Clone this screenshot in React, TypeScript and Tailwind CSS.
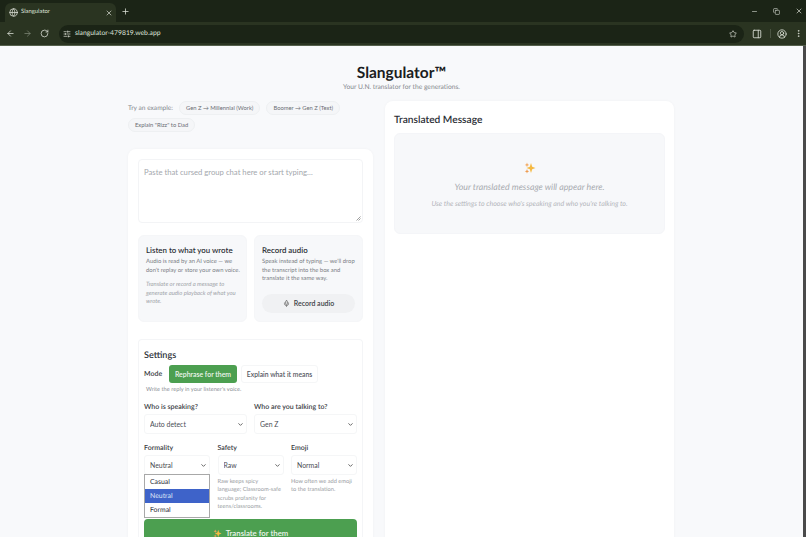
import { ArrowLeft, ArrowRight, RotateCw, SlidersHorizontal, Star, PanelRight, CircleUserRound, EllipsisVertical, Globe, X, Plus, Minus, Copy, Mic, ChevronDown } from "lucide-react";

const font = "font-['Lato',sans-serif] [text-rendering:geometricPrecision]";

const Sparkles = ({ size }: { size: number }) => (
  <svg width={size} height={size} viewBox="0 0 24 24" className="shrink-0">
    <path d="M14 2 L16.4 9.6 L23 12 L16.4 14.4 L14 22 L11.6 14.4 L5 12 L11.6 9.6 Z" fill="#f5b942" />
    <path d="M6 1 L7.2 4.6 L10.5 5.8 L7.2 7 L6 10.5 L4.8 7 L1.5 5.8 L4.8 4.6 Z" fill="#f2a65a" />
    <path d="M6 14 L7.2 17.4 L10.5 18.6 L7.2 19.8 L6 23 L4.8 19.8 L1.5 18.6 L4.8 17.4 Z" fill="#ee9a4d" />
  </svg>
);

const Chip = ({ label }: { label: string }) => (
  <button className="h-[14px] rounded-full border border-[#eef0f2] bg-[#f5f6f8] px-[6px] text-[5.8px] leading-[12px] text-[#6a6d74]">{label}</button>
);

const Field = ({ label, value, className }: { label: string; value: string; className: string }) => (
  <label className={"flex flex-col " + className}>
    <span className="text-[7px] leading-[12px] font-semibold text-[#3a3d44]">{label}</span>
    <div className="relative mt-[1px]">
      <select defaultValue={value} className="block h-[20px] w-full appearance-none rounded-[3px] border border-[#f5f6f7] bg-white pl-[5px] text-[6.9px] text-[#4a4d54] outline-none">
        <option>{value}</option>
      </select>
      <ChevronDown size={7} strokeWidth={3} className="absolute right-[3px] top-[7px] text-[#555]" />
    </div>
  </label>
);

const BrowserChrome = () => (
  <div className="shrink-0 bg-[#1b2416] text-[#dfe3da]">
    <div className="flex h-[22px] items-end pl-[5px]">
      <div className="flex h-[19px] w-[111px] items-center rounded-t-[6px] bg-[#2a3421] pl-[4px] pr-[3px]">
        <Globe size={9} className="shrink-0" />
        <span className="ml-[3px] flex-1 text-[5.9px]">Slangulator</span>
        <X size={8} />
      </div>
      <Plus size={9} className="mb-[6px] ml-[5px]" />
      <div className="mb-[7px] ml-auto flex items-center gap-[15px] pr-[3px]">
        <Minus size={7} />
        <Copy size={7} />
        <X size={8} />
      </div>
    </div>
    <div className="flex h-[23px] items-center bg-[#2a3421] pl-[6px] pr-[3px]">
      <ArrowLeft size={9} />
      <ArrowRight size={9} className="ml-[8px] text-[#7d8676]" />
      <RotateCw size={9} className="ml-[8px]" />
      <div className="ml-[10px] flex h-[18px] flex-1 items-center rounded-full bg-[#1b2416] pl-[4px] pr-[7px]">
        <SlidersHorizontal size={8} />
        <span className="ml-[4px] text-[6.8px]">slangulator-479819.web.app</span>
        <Star size={8} className="ml-auto" />
      </div>
      <PanelRight size={10} className="ml-[8px]" />
      <div className="ml-[8px] h-[9px] w-px bg-[#4a5442]" />
      <CircleUserRound size={10} className="ml-[6px]" />
      <EllipsisVertical size={9} className="ml-[7px]" />
    </div>
    <div className="h-px bg-[#55604c]" />
  </div>
);

const LeftColumn = () => (
  <div className="w-[245px] shrink-0">
    <div className="flex flex-wrap items-center gap-x-[6px] gap-y-[3px]">
      <span className="text-[6.6px] leading-[14px] text-[#85888e]">Try an example:</span>
      <Chip label="Gen Z → Millennial (Work)" />
      <Chip label="Boomer → Gen Z (Text)" />
      <Chip label={'Explain "Rizz" to Dad'} />
    </div>
    <div className="mt-[17px] rounded-t-[8px] bg-white px-[10px] pt-[10px] shadow-[0_0_3px_rgba(0,0,0,0.04)]">
      <div className="relative flex h-[64px] w-full rounded-[4px] border border-[#f3f4f6] bg-white p-[5px] pt-[7px]">
        <textarea placeholder="Paste that cursed group chat here or start typing…" className="h-full w-full resize-none text-[7.7px] text-[#333] outline-none placeholder:text-[#a4a7ad]" />
        {/* resize grip */}
        <svg width="5" height="5" viewBox="0 0 5 5" className="absolute bottom-[1px] right-[1px] text-[#777]">
          <path d="M0.5 4.5 L4.5 0.5 M2.5 4.5 L4.5 2.5" stroke="currentColor" strokeWidth="0.7" />
        </svg>
      </div>
      <div className="mt-[12px] grid grid-cols-2 gap-[7px]">
        <div className="h-[87px] rounded-[6px] border border-[#f5f6f8] bg-[#f7f8fa] pl-[7px] pr-[3px] pt-[8px]">
          <h3 className="whitespace-nowrap text-[7.9px] leading-[13px] font-semibold text-[#2c2f36]">Listen to what you wrote</h3>
          <p className="mt-[1px] text-[5.9px] leading-[8.5px] text-[#7a7e85]">Audio is read by an AI voice — we don't replay or store your own voice.</p>
          <p className="mt-[6px] pr-[3px] text-[5.9px] leading-[8.5px] italic text-[#a0a3a9]">Translate or record a message to generate audio playback of what you wrote.</p>
        </div>
        <div className="h-[87px] rounded-[6px] border border-[#f5f6f8] bg-[#f7f8fa] px-[7px] pt-[8px]">
          <h3 className="text-[7.9px] leading-[13px] font-semibold text-[#2c2f36]">Record audio</h3>
          <p className="mt-[1px] text-[5.9px] leading-[8.5px] text-[#7a7e85]">Speak instead of typing — we'll drop the transcript into the box and translate it the same way.</p>
          <button className="mt-[10px] flex h-[19px] w-full items-center justify-center gap-[4px] rounded-full bg-[#f0f1f3] text-[7px] font-semibold text-[#3c3f46]">
            <Mic size={7} strokeWidth={3} className="text-[#777]" />
            Record audio
          </button>
        </div>
      </div>
      <div className="mt-[17px] rounded-t-[4px] border border-b-0 border-[#f4f5f7] px-[5px] pt-[8px]">
        <h3 className="text-[9.1px] leading-[13px] font-semibold text-[#2c2f36]">Settings</h3>
        <div className="mt-[4px] flex items-center">
          <span className="w-[25px] text-[7px] font-semibold text-[#3a3d44]">Mode</span>
          <button className="h-[18px] w-[68px] whitespace-nowrap rounded-[3px] bg-[#4c9f50] text-[6.9px] font-semibold text-[#eef6ee]">Rephrase for them</button>
          <button className="ml-[4px] h-[18px] w-[77px] whitespace-nowrap rounded-[3px] border border-[#f5f6f7] bg-white text-[6.8px] font-semibold text-[#55585f]">Explain what it means</button>
        </div>
        <p className="ml-[2px] mt-[2px] text-[5.7px] leading-[9px] text-[#8a8e94]">Write the reply in your listener's voice.</p>
        <div className="mt-[7px] flex gap-[7px]">
          <Field label="Who is speaking?" value="Auto detect" className="w-[103px]" />
          <Field label="Who are you talking to?" value="Gen Z" className="w-[103px]" />
        </div>
        <div className="mt-[8px] flex gap-[7.5px]">
          <div className="relative w-[66px] shrink-0">
            <Field label="Formality" value="Neutral" className="w-full" />
            {/* open select list */}
            <div className="absolute left-0 top-[32px] z-10 w-full border border-[#a8a8a8] bg-white text-[6.9px] leading-[14px] text-[#2c2f36]">
              <div className="pl-[5px]">Casual</div>
              <div className="bg-[#3e63c9] pl-[5px] text-[#dfe6f7]">Neutral</div>
              <div className="pl-[5px]">Formal</div>
            </div>
          </div>
          <div className="w-[66px] shrink-0">
            <Field label="Safety" value="Raw" className="w-full" />
            <p className="mt-[3px] text-[5.7px] leading-[8.4px] text-[#989ba1]">Raw keeps spicy<br />language; Classroom-safe scrubs profanity for teens/classrooms.</p>
          </div>
          <div className="w-[66px] shrink-0">
            <Field label="Emoji" value="Normal" className="w-full" />
            <p className="mt-[3px] text-[5.7px] leading-[8.4px] text-[#989ba1]">How often we add emoji to the translation.</p>
          </div>
        </div>
        <button className="mt-[7px] flex h-[30px] w-full items-center justify-center gap-[4px] rounded-[4px] bg-[#4c9f50] text-[7.8px] font-semibold text-[#eef6ee]">
          <Sparkles size={9} />
          Translate for them
        </button>
      </div>
    </div>
  </div>
);

const RightColumn = () => (
  <div className="h-[700px] w-[289px] shrink-0 rounded-[8px] bg-white px-[9px] pt-[12px] shadow-[0_0_3px_rgba(0,0,0,0.04)]">
    <h2 className="text-[10.2px] leading-[14px] font-semibold text-[#2c2f36]">Translated Message</h2>
    <div className="mt-[6px] flex h-[101px] flex-col items-center rounded-[6px] border border-[#f4f5f8] bg-[#f7f8fa] pt-[28px]">
      <Sparkles size={12} />
      <p className="mt-[6px] text-[8.8px] leading-[13px] font-normal italic text-[#a8abb0]">Your translated message will appear here.</p>
      <p className="mt-[6px] text-[7px] leading-[10px] italic text-[#b4b6bb]">Use the settings to choose who's speaking and who you're talking to.</p>
    </div>
  </div>
);

export default function App() {
  return (
    <div className={"flex h-[537px] w-[806px] flex-col overflow-hidden " + font}>
      <BrowserChrome />
      <div className="flex min-h-0 flex-1">
        <div className="min-w-0 flex-1 overflow-hidden bg-[#f8f9fb]">
          <div className="pt-[17px] text-center">
            <h1 className="text-[15.5px] leading-[20px] font-bold text-[#1a1c20]">Slangulator™</h1>
            <p className="text-[6.7px] leading-[9px] text-[#85888e]">Your U.N. translator for the generations.</p>
          </div>
          <div className="ml-[128px] mt-[9px] flex items-start gap-[12px]">
            <LeftColumn />
            <RightColumn />
          </div>
        </div>
        <div className="w-[3px] shrink-0 bg-[#4a4a4a]" />
      </div>
    </div>
  );
}
